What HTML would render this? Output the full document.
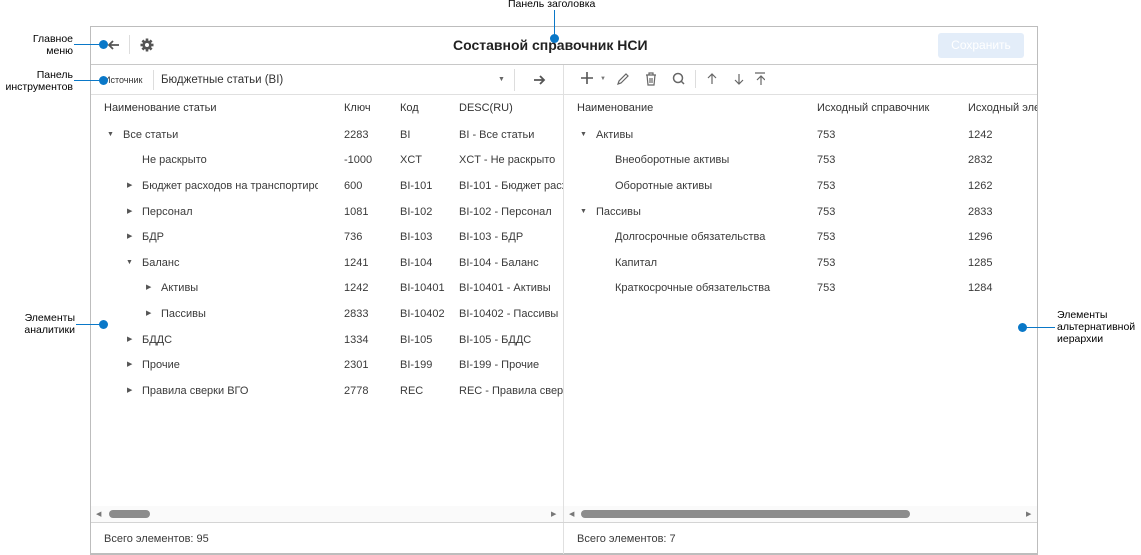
<!DOCTYPE html>
<html><head><meta charset="utf-8"><style>
*{margin:0;padding:0;box-sizing:border-box}
body{width:1141px;height:555px;background:#fff;font-family:"Liberation Sans",sans-serif;position:relative;overflow:hidden;color:#333}
.a{position:absolute;white-space:nowrap}
.t{font-size:11px;color:#3a3a3a;line-height:13px}
.h{font-size:11px;color:#333;line-height:13px}
.lbl{font-size:10.5px;color:#000;line-height:12px;text-align:right}
.dot{position:absolute;width:9px;height:9px;border-radius:50%;background:#0a78c8}
.ln{position:absolute;background:#0a78c8}
.tri{position:absolute;font-size:7px;color:#555;line-height:8px}
</style></head><body>
<div class="a" style="left:90px;top:26px;width:948px;height:529px;border:1px solid #bdbdbd;border-bottom:2px solid #bdbdbd"></div>
<div class="a" style="left:91px;top:64px;width:946px;height:1px;background:#c8c8c8"></div>
<div class="a" style="left:91px;top:94px;width:946px;height:1px;background:#e0e0e0"></div>
<div class="a" style="left:563px;top:65px;width:1px;height:489px;background:#e0e0e0"></div>
<div class="a" style="left:91px;top:522px;width:946px;height:1px;background:#d4d4d4"></div>
<!-- header -->
<svg class="a" style="left:107px;top:38px" width="14" height="14" viewBox="0 0 14 14" fill="none" stroke="#555" stroke-width="1.8"><path d="M12 7H2M6 3L2 7l4 4"/></svg>
<div class="a" style="left:129px;top:35px;width:1px;height:19px;background:#ddd"></div>
<svg class="a" style="left:140px;top:38px" width="14" height="14" viewBox="0 0 14 14"><g fill="#555"><circle cx="7" cy="7" r="4.6"/><rect x="5.7" y="0.5" width="2.6" height="13"/><rect x="0.5" y="5.7" width="13" height="2.6"/><rect x="5.7" y="0.5" width="2.6" height="13" transform="rotate(45 7 7)"/><rect x="5.7" y="0.5" width="2.6" height="13" transform="rotate(-45 7 7)"/></g><circle cx="7" cy="7" r="2" fill="#fff"/></svg>
<div class="a" style="left:453px;top:37px;font-size:14px;font-weight:bold;color:#222">Составной справочник НСИ</div>
<div class="a" style="left:938px;top:33px;width:86px;height:25px;background:#e3edf9;border-radius:3px;color:#fff;font-size:12px;text-align:center;line-height:25px">Сохранить</div>
<!-- toolbar left -->
<div class="a" style="left:104px;top:75px;font-size:9px;color:#333">Источник</div>
<div class="a" style="left:153px;top:70px;width:1px;height:20px;background:#ddd"></div>
<div class="a" style="left:161px;top:74px;font-size:11.5px;color:#333">Бюджетные статьи (BI)</div>
<div class="a" style="left:498px;top:76px;font-size:7px;color:#666">&#9660;</div>
<div class="a" style="left:514px;top:69px;width:1px;height:22px;background:#ddd"></div>
<svg class="a" style="left:532px;top:73px" width="14" height="14" viewBox="0 0 14 14" fill="none" stroke="#555" stroke-width="1.8"><path d="M2 7h10M8 3l4 4-4 4"/></svg>
<!-- toolbar right -->
<svg class="a" style="left:581px;top:72px" width="12" height="12" viewBox="0 0 12 12" stroke="#555" stroke-width="1.6"><path d="M6 0v12M0 6h12"/></svg>
<div class="a" style="left:600px;top:76px;font-size:6px;color:#777">&#9660;</div>
<svg class="a" style="left:615px;top:71px" width="150" height="16" viewBox="0 0 150 16" fill="none" stroke="#666" stroke-width="1.2">
<path d="M3 13l1-3 7-7 2 2-7 7z"/>
<path d="M31 4h10M34 4V2h4v2M32 4l1 10h6l1-10M35 7v5M37 7v5"/>
<circle cx="63" cy="7" r="4.5" stroke-width="1.5"/><path d="M66 10l3 3" stroke-width="1.5"/>
<path d="M97 13V3M93 7l4-4 4 4M124 3v10M120 9l4 4 4-4M146 5v9M142 9l4-4 4 4M140 2h12"/>
</svg>
<div class="a" style="left:695px;top:70px;width:1px;height:18px;background:#ddd"></div>
<!-- left column headers -->
<div class="a h" style="left:104px;top:102px">Наименование статьи</div>
<div class="a h" style="left:344px;top:102px">Ключ</div>
<div class="a h" style="left:400px;top:102px">Код</div>
<div class="a h" style="left:459px;top:102px">DESC(RU)</div>
<!-- right headers -->
<div class="a h" style="left:577px;top:102px">Наименование</div>
<div class="a h" style="left:817px;top:102px">Исходный справочник</div>
<div class="a h" style="left:968px;top:102px;width:69px;overflow:hidden">Исходный элемент</div>
<div style="position:absolute;left:0;top:1px;width:563px;height:519px;overflow:hidden">
<div class="tri" style="left:107px;top:130px">&#9660;</div><div class="a t" style="left:123px;top:128px">Все статьи</div><div class="a t" style="left:344px;top:128px">2283</div><div class="a t" style="left:400px;top:128px">BI</div><div class="a t" style="left:459px;top:128px">BI - Все статьи</div>
<div class="a t" style="left:142px;top:153px">Не раскрыто</div><div class="a t" style="left:344px;top:153px">-1000</div><div class="a t" style="left:400px;top:153px">XCT</div><div class="a t" style="left:459px;top:153px">XCT - Не раскрыто</div>
<div class="tri" style="left:127px;top:181px">&#9654;</div><div class="a t" style="left:142px;top:179px;width:176px;overflow:hidden">Бюджет расходов на транспортировку</div><div class="a t" style="left:344px;top:179px">600</div><div class="a t" style="left:400px;top:179px">BI-101</div><div class="a t" style="left:459px;top:179px">BI-101 - Бюджет расходов</div>
<div class="tri" style="left:127px;top:207px">&#9654;</div><div class="a t" style="left:142px;top:205px">Персонал</div><div class="a t" style="left:344px;top:205px">1081</div><div class="a t" style="left:400px;top:205px">BI-102</div><div class="a t" style="left:459px;top:205px">BI-102 - Персонал</div>
<div class="tri" style="left:127px;top:232px">&#9654;</div><div class="a t" style="left:142px;top:230px">БДР</div><div class="a t" style="left:344px;top:230px">736</div><div class="a t" style="left:400px;top:230px">BI-103</div><div class="a t" style="left:459px;top:230px">BI-103 - БДР</div>
<div class="tri" style="left:126px;top:258px">&#9660;</div><div class="a t" style="left:142px;top:256px">Баланс</div><div class="a t" style="left:344px;top:256px">1241</div><div class="a t" style="left:400px;top:256px">BI-104</div><div class="a t" style="left:459px;top:256px">BI-104 - Баланс</div>
<div class="tri" style="left:146px;top:283px">&#9654;</div><div class="a t" style="left:161px;top:281px">Активы</div><div class="a t" style="left:344px;top:281px">1242</div><div class="a t" style="left:400px;top:281px">BI-10401</div><div class="a t" style="left:459px;top:281px">BI-10401 - Активы</div>
<div class="tri" style="left:146px;top:309px">&#9654;</div><div class="a t" style="left:161px;top:307px">Пассивы</div><div class="a t" style="left:344px;top:307px">2833</div><div class="a t" style="left:400px;top:307px">BI-10402</div><div class="a t" style="left:459px;top:307px">BI-10402 - Пассивы</div>
<div class="tri" style="left:127px;top:335px">&#9654;</div><div class="a t" style="left:142px;top:333px">БДДС</div><div class="a t" style="left:344px;top:333px">1334</div><div class="a t" style="left:400px;top:333px">BI-105</div><div class="a t" style="left:459px;top:333px">BI-105 - БДДС</div>
<div class="tri" style="left:127px;top:360px">&#9654;</div><div class="a t" style="left:142px;top:358px">Прочие</div><div class="a t" style="left:344px;top:358px">2301</div><div class="a t" style="left:400px;top:358px">BI-199</div><div class="a t" style="left:459px;top:358px">BI-199 - Прочие</div>
<div class="tri" style="left:127px;top:386px">&#9654;</div><div class="a t" style="left:142px;top:384px">Правила сверки ВГО</div><div class="a t" style="left:344px;top:384px">2778</div><div class="a t" style="left:400px;top:384px">REC</div><div class="a t" style="left:459px;top:384px">REC - Правила сверки ВГО</div>
</div>
<div style="position:absolute;left:564px;top:1px;width:473px;height:519px;overflow:hidden">
<div class="tri" style="left:16px;top:130px">&#9660;</div><div class="a t" style="left:32px;top:128px">Активы</div><div class="a t" style="left:253px;top:128px">753</div><div class="a t" style="left:404px;top:128px">1242</div>
<div class="a t" style="left:51px;top:153px">Внеоборотные активы</div><div class="a t" style="left:253px;top:153px">753</div><div class="a t" style="left:404px;top:153px">2832</div>
<div class="a t" style="left:51px;top:179px">Оборотные активы</div><div class="a t" style="left:253px;top:179px">753</div><div class="a t" style="left:404px;top:179px">1262</div>
<div class="tri" style="left:16px;top:207px">&#9660;</div><div class="a t" style="left:32px;top:205px">Пассивы</div><div class="a t" style="left:253px;top:205px">753</div><div class="a t" style="left:404px;top:205px">2833</div>
<div class="a t" style="left:51px;top:230px">Долгосрочные обязательства</div><div class="a t" style="left:253px;top:230px">753</div><div class="a t" style="left:404px;top:230px">1296</div>
<div class="a t" style="left:51px;top:256px">Капитал</div><div class="a t" style="left:253px;top:256px">753</div><div class="a t" style="left:404px;top:256px">1285</div>
<div class="a t" style="left:51px;top:281px">Краткосрочные обязательства</div><div class="a t" style="left:253px;top:281px">753</div><div class="a t" style="left:404px;top:281px">1284</div>
</div>
<!-- scrollbars -->
<div class="a" style="left:91px;top:506px;width:472px;height:16px;background:#fafafa"></div>
<div class="a" style="left:564px;top:506px;width:473px;height:16px;background:#fafafa"></div>
<div class="a" style="left:96px;top:510px;font-size:7px;color:#777">&#9664;</div>
<div class="a" style="left:109px;top:510px;width:41px;height:8px;border-radius:4px;background:#8c8c8c"></div>
<div class="a" style="left:551px;top:510px;font-size:7px;color:#777">&#9654;</div>
<div class="a" style="left:569px;top:510px;font-size:7px;color:#777">&#9664;</div>
<div class="a" style="left:581px;top:510px;width:329px;height:8px;border-radius:4px;background:#8c8c8c"></div>
<div class="a" style="left:1026px;top:510px;font-size:7px;color:#777">&#9654;</div>
<div class="a t" style="left:104px;top:533px">Всего элементов: 95</div>
<div class="a t" style="left:577px;top:533px">Всего элементов: 7</div>
<!-- annotations -->
<div class="a lbl" style="left:0;top:33px;width:73px">Главное<br>меню</div>
<div class="ln" style="left:74px;top:44px;width:30px;height:1px"></div><div class="dot" style="left:99px;top:40px"></div>
<div class="a lbl" style="left:0;top:69px;width:73px">Панель<br>инструментов</div>
<div class="ln" style="left:74px;top:80px;width:30px;height:1px"></div><div class="dot" style="left:99px;top:76px"></div>
<div class="a lbl" style="left:0;top:312px;width:75px">Элементы<br>аналитики</div>
<div class="ln" style="left:76px;top:324px;width:28px;height:1px"></div><div class="dot" style="left:99px;top:320px"></div>
<div class="a lbl" style="left:508px;top:-2px;width:92px;text-align:left">Панель заголовка</div>
<div class="ln" style="left:554px;top:10px;width:1px;height:28px"></div><div class="dot" style="left:550px;top:34px"></div>
<div class="a lbl" style="left:1057px;top:309px;text-align:left">Элементы<br>альтернативной<br>иерархии</div>
<div class="ln" style="left:1022px;top:327px;width:33px;height:1px"></div><div class="dot" style="left:1018px;top:323px"></div>
</body></html>
